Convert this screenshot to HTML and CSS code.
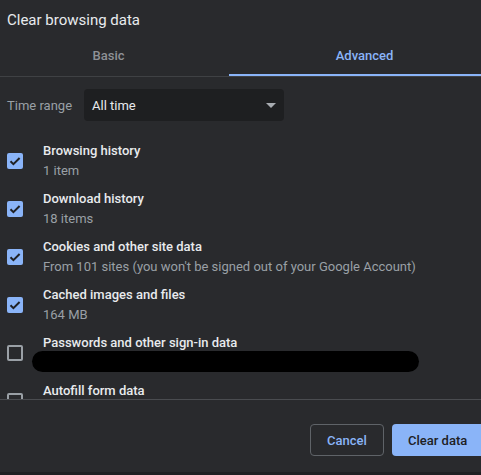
FILE: index.html
```html
<!DOCTYPE html>
<html>
<head>
<meta charset="utf-8">
<link rel="stylesheet" href="styles.css">
</head>
<body>
<div class="dialog">
  <div class="title">Clear browsing data</div>
  <div class="tabs">
    <div class="tab tab-basic">Basic</div>
    <div class="tab tab-adv">Advanced</div>
  </div>
  <div class="body">
    <div class="range">
      <span class="range-label">Time range</span>
      <div class="select">
        <span>All time</span>
        <svg class="arrow" width="10" height="5" viewBox="0 0 10 5"><polygon points="0,0 10,0 5,5" fill="#a8acb1"/></svg>
      </div>
    </div>
    <div class="row">
      <span class="cb on"><svg width="16" height="16" viewBox="0 0 16 16"><path d="M3.5 8.3 L6.4 11.2 L12.6 5" fill="none" stroke="#202124" stroke-width="2"/></svg></span>
      <div class="text"><div class="t">Browsing history</div><div class="s">1 item</div></div>
    </div>
    <div class="row">
      <span class="cb on"><svg width="16" height="16" viewBox="0 0 16 16"><path d="M3.5 8.3 L6.4 11.2 L12.6 5" fill="none" stroke="#202124" stroke-width="2"/></svg></span>
      <div class="text"><div class="t">Download history</div><div class="s">18 items</div></div>
    </div>
    <div class="row">
      <span class="cb on"><svg width="16" height="16" viewBox="0 0 16 16"><path d="M3.5 8.3 L6.4 11.2 L12.6 5" fill="none" stroke="#202124" stroke-width="2"/></svg></span>
      <div class="text"><div class="t">Cookies and other site data</div><div class="s">From 101 sites (you won't be signed out of your Google Account)</div></div>
    </div>
    <div class="row">
      <span class="cb on"><svg width="16" height="16" viewBox="0 0 16 16"><path d="M3.5 8.3 L6.4 11.2 L12.6 5" fill="none" stroke="#202124" stroke-width="2"/></svg></span>
      <div class="text"><div class="t">Cached images and files</div><div class="s">164 MB</div></div>
    </div>
    <div class="row">
      <span class="cb off"></span>
      <div class="text"><div class="t">Passwords and other sign-in data</div><div class="s"><span class="redact"></span></div></div>
    </div>
    <div class="row">
      <span class="cb off"></span>
      <div class="text"><div class="t">Autofill form data</div><div class="s">&nbsp;</div></div>
    </div>
  </div>
  <div class="footer">
    <button class="btn cancel">Cancel</button>
    <button class="btn clear">Clear data</button>
  </div>
</div>
</body>
</html>
```
FILE: styles.css
```css
html, body {
  margin: 0;
  padding: 0;
  background: #1f2023;
  overflow: hidden;
}
body {
  font-family: Roboto, "Liberation Sans", sans-serif;
  width: 481px;
  height: 475px;
}
.dialog {
  width: 481px;
  height: 472px;
  background: #292a2d;
  display: flex;
  flex-direction: column;
  overflow: hidden;
}
.title {
  padding: 10px 0 0 7px;
  font-size: 15px;
  line-height: 20px;
  height: 20px;
  color: #e8eaed;
  white-space: nowrap;
}
.tabs {
  display: flex;
  border-bottom: 1px solid #3f4144;
  height: 46px;
}
.tab {
  box-sizing: border-box;
  height: 46px;
  padding-top: 16px;
  font-size: 13px;
  line-height: 20px;
  font-weight: 500;
  text-align: center;
  border-bottom: 2px solid transparent;
}
.tab-basic {
  width: 229px;
  flex: none;
  padding-right: 12px;
  color: #8e9196;
}
.tab-adv {
  flex: 1;
  padding-left: 19px;
  color: #8ab4f8;
  border-bottom-color: #8ab4f8;
}
.body {
  height: 322px;
  overflow: hidden;
  border-bottom: 1px solid #4a4c50;
  flex: none;
}
.range {
  display: flex;
  align-items: center;
  margin-top: 12px;
  padding-left: 7px;
  gap: 13px;
}
.range-label {
  font-size: 13px;
  color: #9aa0a6;
  width: 64px;
  flex: none;
  white-space: nowrap;
}
.select {
  box-sizing: border-box;
  width: 200px;
  height: 32px;
  flex: none;
  border-radius: 4px;
  background: #1e1f21;
  display: flex;
  align-items: center;
  justify-content: space-between;
  padding: 0 8px;
  font-size: 13px;
  color: #e8eaed;
}
.arrow { display: block; }
.range + .row { margin-top: 16px; }
.row {
  display: flex;
  align-items: center;
  height: 48px;
  padding-left: 7px;
  gap: 20px;
}
.cb {
  box-sizing: border-box;
  width: 16px;
  height: 16px;
  border-radius: 2px;
  flex: none;
}
.cb svg { display: block; }
.cb.on { background: #8ab4f8; }
.cb.off { border: 2px solid #9aa0a6; }
.text {
  font-size: 13px;
  line-height: 20px;
  white-space: nowrap;
}
.t { color: #e8eaed; font-weight: 500; }
.s { color: #9aa0a6; height: 20px; position: relative; }
.redact {
  position: absolute;
  left: -11px;
  top: -2px;
  width: 387px;
  height: 21px;
  border-radius: 11px;
  background: #000;
}
.footer {
  display: flex;
  justify-content: flex-end;
  gap: 8px;
  padding-top: 24px;
  margin-right: -2px;
}
.btn {
  height: 32px;
  box-sizing: border-box;
  border-radius: 4px;
  font-family: Roboto, "Liberation Sans", sans-serif;
  font-size: 13px;
  font-weight: 500;
  padding: 0 16px;
  white-space: nowrap;
  flex: none;
  cursor: pointer;
}
.cancel {
  background: transparent;
  border: 1px solid #5f6368;
  color: #8ab4f8;
  width: 74px;
}
.clear {
  background: #8ab4f8;
  border: none;
  color: #202124;
  width: 91px;
  border-radius: 4px 0 0 4px;
}
```
